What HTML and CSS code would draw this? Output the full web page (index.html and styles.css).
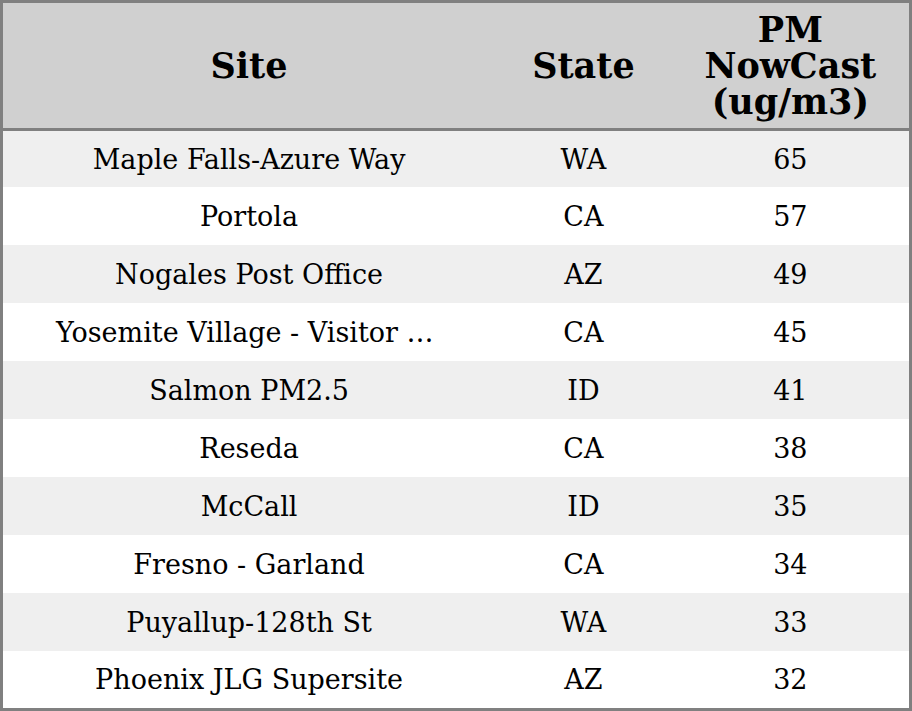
FILE: index.html
```html
<!DOCTYPE html>
<html>
<head>
<meta charset="utf-8">
<link rel="stylesheet" href="styles.css">
</head>
<body>
<table class="grid">
  <colgroup>
    <col class="c-site">
    <col class="c-state">
    <col class="c-pm">
  </colgroup>
  <thead>
    <tr><th>Site</th><th>State</th><th>PM<br>NowCast<br>(ug/m3)</th></tr>
  </thead>
  <tbody>
    <tr><td><div class="clip">Maple Falls-Azure Way</div></td><td>WA</td><td>65</td></tr>
    <tr><td><div class="clip">Portola</div></td><td>CA</td><td>57</td></tr>
    <tr><td><div class="clip">Nogales Post Office</div></td><td>AZ</td><td>49</td></tr>
    <tr><td><div class="clip">Yosemite Village - Visitor Center</div></td><td>CA</td><td>45</td></tr>
    <tr><td><div class="clip">Salmon PM2.5</div></td><td>ID</td><td>41</td></tr>
    <tr><td><div class="clip">Reseda</div></td><td>CA</td><td>38</td></tr>
    <tr><td><div class="clip">McCall</div></td><td>ID</td><td>35</td></tr>
    <tr><td><div class="clip">Fresno - Garland</div></td><td>CA</td><td>34</td></tr>
    <tr><td><div class="clip">Puyallup-128th St</div></td><td>WA</td><td>33</td></tr>
    <tr><td><div class="clip">Phoenix JLG Supersite</div></td><td>AZ</td><td>32</td></tr>
  </tbody>
</table>
</body>
</html>
```
FILE: styles.css
```css
html, body {
  margin: 0;
  padding: 0;
  background: #ffffff;
}
.grid {
  width: 912px;
  height: 711px;
  border-collapse: collapse;
  table-layout: fixed;
  border: 3px solid #808080;
  font-family: "DejaVu Serif", serif;
  color: #000;
}
.c-site { width: 492px; }
.c-state { width: 176px; }
.c-pm { width: 238px; }
.grid th {
  background: #d0d0d0;
  font-weight: bold;
  font-size: 35px;
  line-height: 36px;
  height: 125px;
  padding: 0;
  text-align: center;
  vertical-align: middle;
  border-bottom: 3px solid #808080;
}
.grid td {
  font-size: 27px;
  height: 58px;
  padding: 0;
  text-align: center;
  vertical-align: middle;
}
.grid tbody tr:first-child td { height: 56px; }
.grid tbody tr:last-child td { height: 57px; }
.grid tbody tr:nth-child(odd) td { background: #efefef; }
.clip {
  padding: 0 53px;
  white-space: nowrap;
  overflow: hidden;
  text-overflow: ellipsis;
}
```
